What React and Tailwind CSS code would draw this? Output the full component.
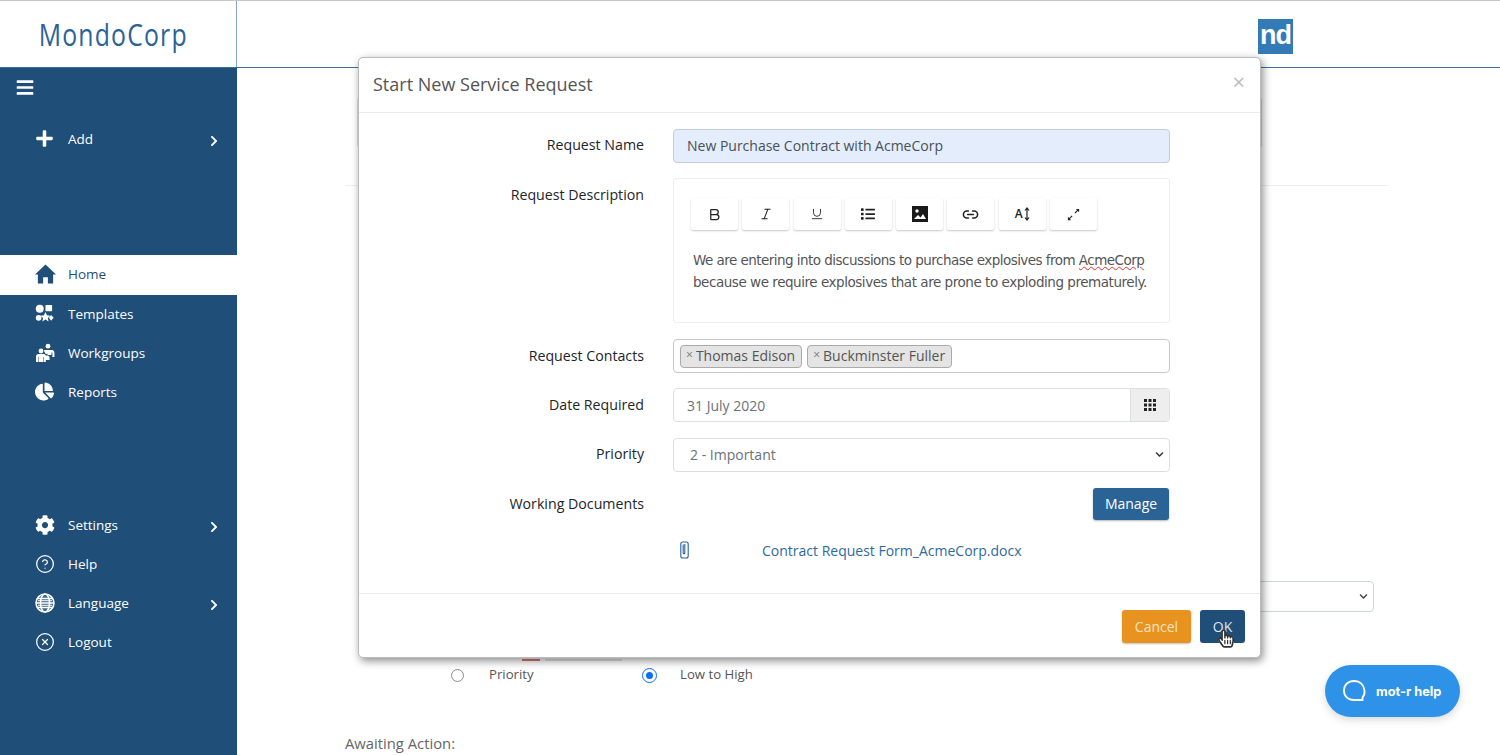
import React from "react";
import { FaBars, FaPlus, FaChevronRight, FaCog, FaChartPie, FaList, FaHandPointer, FaRegHandPointer, FaChevronDown } from "react-icons/fa";
import { Bold, Italic, Underline, Link2, CircleHelp, CircleX } from "lucide-react";

const font = "font-['Open_Sans','Noto_Sans',sans-serif]";

function Home() {
  return (
    <svg viewBox="0 0 22 20" className="w-[21px] h-[20px]" fill="#1f4e79">
      <path d="M11 0L22 10.500h-3V20h-5.500v-6.500h-5V20H3v-9.500H0z" />
    </svg>
  );
}
function Templates() {
  return (
    <svg viewBox="0 0 20 20" className="w-[19px] h-[19px]" fill="white">
      <circle cx="5" cy="5" r="4.200" />
      <rect x="11" y="1" width="7" height="6.500" rx="0.500" />
      <circle cx="3.800" cy="14.500" r="3" />
      <path d="M11 8.500l1.600 3.400 3.600.4-2.700 2.400.8 3.600-3.300-1.900-3.300 1.900.8-3.600-2.700-2.400 3.600-.4z" />
      <path d="M17 11.500l2.600 3-2.600 3-2.400-3z" />
    </svg>
  );
}
function Workgroups() {
  return (
    <svg viewBox="0 0 20 20" className="w-[20px] h-[20px]" fill="white">
      <circle cx="13" cy="3.200" r="2.400" />
      <path d="M9 7h8c1.400 0 2.400 1 2.400 2.400V14h-2V9.500h-.9V12h-4V9h-3z" />
      <circle cx="6" cy="8" r="2.400" />
      <circle cx="11.500" cy="9" r="1.900" />
      <path d="M1 19v-5.500C1 12 2 11 3.500 11h5c1.200 0 2 .6 2.400 1.500h1.600c1.400 0 2 1 2 2.200V17h-3.700v2H8.500v-5H8v5H3.500v-5H3v5z" />
    </svg>
  );
}
function Globe() {
  return (
    <svg viewBox="0 0 20 20" className="w-[20px] h-[20px]" fill="none" stroke="white" strokeWidth="1.500">
      <circle cx="10" cy="10" r="9" fill="white" fillOpacity="0.15" />
      <ellipse cx="10" cy="10" rx="4.500" ry="9" />
      <path d="M2 5.500h16M1 10h18M2 14.500h16" />
      <path d="M3 7.700h14M3 12.300h14" strokeWidth="1" />
    </svg>
  );
}
function NavItem({ icon, label, arrow, active }) {
  return (
    <div className={`flex items-center pb-[2px] pl-[35px] pr-[18px] ${active ? "bg-white text-[#1f4e79] h-[40px]" : "text-white h-[39px]"}`}>
      <span className="w-[33px] flex items-center shrink-0">{icon}</span>
      <span className={`flex-1 text-[13.500px] ${active ? "" : "mt-[2px]"}`}>{label}</span>
      {arrow && <FaChevronRight className="w-[10px] h-[12px] text-white mt-[4px]" />}
    </div>
  );
}
function FieldRow({ label, children, className = "", labelPad = "pt-[5px]" }) {
  return (
    <div className={`flex ${className}`}>
      <div className={`w-[285px] text-right text-[14.200px] font-medium text-[#212529] shrink-0 ${labelPad}`}>{label}</div>
      <div className="ml-[29px] w-[497px]">{children}</div>
    </div>
  );
}
function ToolBtn({ children }) {
  return (
    <div className="w-[47px] h-[32px] bg-white rounded-[2px] shadow-[0_1px_2px_rgba(0,0,0,0.22)] flex items-center justify-center text-[#222]">
      {children}
    </div>
  );
}
function Chip({ children }) {
  return (
    <span className="h-[23px] flex items-center pl-[5px] pr-[6px] pb-[2px] bg-[#e4e4e4] border border-[#aaa] rounded-[4px] text-[14px] text-[#555]">
      <span className="text-[#777] mr-[3px] text-[12px]">×</span>{children}
    </span>
  );
}

export default function App() {
  return (
    <div className={`w-[1500px] h-[755px] relative overflow-hidden bg-white flex flex-col ${font}`}>
      <header className="h-[68px] shrink-0 flex bg-white border-t border-t-[#c8c8c8] border-b border-b-[#3a6f9f]">
        <div className="w-[237px] border-r border-[#8aa5bd] flex items-center justify-center pr-[9px]">
          <span className="inline-block scale-x-[0.8] font-['Open_Sans',sans-serif] font-medium text-[31px] tracking-[1.500px] text-[#2a6496] leading-none">MondoCorp</span>
        </div>
        <div className="flex-1 flex items-start pl-[1021px] pt-[18px]">
          <div className="w-[35px] h-[35px] bg-[#337ab7] flex items-center justify-center text-white font-['Liberation_Sans',sans-serif] font-bold text-[27px] tracking-[-1px] leading-none pb-[2px]">nd</div>
        </div>
      </header>

      <div className="flex-1 flex min-h-0">
        <aside className="w-[237px] shrink-0 bg-[#1f4e79] flex flex-col">
          <div className="h-[187px] pt-[10px] shrink-0">
            <div className="pl-[16px] h-[17px]"><FaBars className="w-[18px] h-[19px] text-white" /></div>
            <div className="mt-[25px]">
              <NavItem icon={<FaPlus className="w-[19px] h-[19px] text-white" />} label="Add" arrow />
            </div>
          </div>
          <NavItem active icon={<Home />} label="Home" />
          <NavItem icon={<Templates />} label="Templates" />
          <NavItem icon={<Workgroups />} label="Workgroups" />
          <NavItem icon={<FaChartPie className="w-[19px] h-[19px] text-white" />} label="Reports" />
          <div className="h-[94px] shrink-0" />
          <NavItem icon={<FaCog className="w-[20px] h-[20px] text-white" />} label="Settings" arrow />
          <NavItem icon={<CircleHelp size={20} strokeWidth={1.500} className="text-white" />} label="Help" />
          <NavItem icon={<Globe />} label="Language" arrow />
          <NavItem icon={<CircleX size={20} strokeWidth={1.500} className="text-white" />} label="Logout" />
        </aside>

        <main className="flex-1 pl-[108px] pr-[112px] flex flex-col min-w-0">
          <div className="h-[118px] shrink-0 border-b border-[#eeeeee] pt-[29px] pl-[12px] pr-[126px]">
            <div className="h-[51px] border border-[#d5e0ea] rounded-[3px]" />
          </div>
          <div className="mt-[395px] h-[31px] flex justify-end pr-[14px] shrink-0">
            <div className="w-[400px] h-[31px] border border-[#ced4da] rounded-[4px] flex items-center justify-end pr-[5px]">
              <FaChevronDown className="w-[9px] h-[9px] text-[#444]" />
            </div>
          </div>
          <div className="h-[10px] mt-[39px] flex items-end pl-[177px] gap-[5px] shrink-0">
            <span className="w-[18px] h-[2px] bg-[#e07070]" />
            <span className="w-[77px] h-[2px] bg-[#e2e2e2]" />
          </div>
          <div className="flex items-center h-[20px] mt-[4px] pl-[106px] text-[13.200px] text-[#555] shrink-0">
            <span className="w-[13px] h-[13px] rounded-full border border-[#8a8a8a] shrink-0" />
            <span className="ml-[25px] w-[154px]">Priority</span>
            <span className="w-[13px] h-[13px] rounded-full border-[3px] border-white bg-[#0d6efd] shrink-0 outline-1 outline-[#0d6efd]" />
            <span className="ml-[24px]">Low to High</span>
          </div>
          <div className="mt-[47px] text-[14.800px] text-[#666] shrink-0">Awaiting Action:</div>
        </main>
      </div>

      {/* Modal */}
      <div className="absolute left-[358px] top-[57px] w-[903px] h-[601px] bg-white rounded-[5px] border border-[#bbb] shadow-[2px_3px_8px_rgba(0,0,0,0.45)] flex flex-col">
        <div className="h-[55px] shrink-0 flex items-center justify-between pl-[14px] pr-[15px] pb-[2px] border-b border-[#e9ecef]">
          <h2 className="text-[18px] text-[#555] font-normal">Start New Service Request</h2>
          <span className="text-[22px] leading-none text-[#bdbdbd] -mt-[6px]">×</span>
        </div>
        <div className="flex-1 flex flex-col pt-[16px]">
          <FieldRow label="Request Name">
            <div className="h-[34px] rounded-[4px] bg-[#e4edfb] border border-[#c4ceda] flex items-center pl-[13px] pb-[1px] text-[14px] text-[#495057]">
              New Purchase Contract with AcmeCorp
            </div>
          </FieldRow>
          <FieldRow className="mt-[15px]" labelPad="pt-[6px]" label="Request Description">
            <div className="h-[145px] border border-[#eeeeee] rounded-[3px] pt-[19px] pl-[17px]">
              <div className="flex gap-[4.300px]">
                <ToolBtn><Bold size={15} strokeWidth={2} /></ToolBtn>
                <ToolBtn><Italic size={14} strokeWidth={1.800} /></ToolBtn>
                <ToolBtn><Underline size={14} strokeWidth={1.500} /></ToolBtn>
                <ToolBtn><FaList className="w-[16px] h-[14px]" /></ToolBtn>
                <ToolBtn>
                  <svg viewBox="0 0 16 16" className="w-[16px] h-[16px]">
                    <rect width="16" height="16" fill="#1a1a1a" />
                    <circle cx="5" cy="5" r="1.700" fill="white" />
                    <path d="M2 13l4-4 2.500 2.500L11 8l3 5z" fill="white" />
                  </svg>
                </ToolBtn>
                <ToolBtn><Link2 size={17} strokeWidth={2.200} /></ToolBtn>
                <ToolBtn>
                  <span className="text-[12px] font-semibold">A</span>
                  <svg viewBox="0 0 6 14" className="w-[6px] h-[14px] ml-[1px]" fill="none" stroke="#222" strokeWidth="1.200">
                    <path d="M3 1v12M1 3.500L3 1l2 2.500M1 10.500L3 13l2-2.500" />
                  </svg>
                </ToolBtn>
                <ToolBtn>
                  <svg viewBox="0 0 16 16" className="w-[15px] h-[15px]" fill="#222" stroke="#222" strokeWidth="1.200">
                    <path d="M9.500 6.500L13 3" fill="none" />
                    <path d="M10.500 2h3.500v3.500z" stroke="none" />
                    <path d="M6.500 9.500L3 13" fill="none" />
                    <path d="M5.500 14H2v-3.500z" stroke="none" />
                  </svg>
                </ToolBtn>
              </div>
              <div className="mt-[19px] ml-[2px] w-[470px] text-[13.500px] leading-[22px] text-[#555] font-['DejaVu_Sans',sans-serif] whitespace-nowrap">
                <div className="tracking-[-0.54px]">We are entering into discussions to purchase explosives from <span className="underline decoration-wavy decoration-[#d33] decoration-1">AcmeCorp</span></div>
                <div className="tracking-[-0.46px]">because we require explosives that are prone to exploding prematurely.</div>
              </div>
            </div>
          </FieldRow>
          <FieldRow className="mt-[16px]" labelPad="pt-[6px]" label="Request Contacts">
            <div className="h-[34px] rounded-[4px] border border-[#c4c8cc] flex items-center pl-[6px] gap-[5px]">
              <Chip>Thomas Edison</Chip>
              <Chip>Buckminster Fuller</Chip>
            </div>
          </FieldRow>
          <FieldRow className="mt-[15px]" labelPad="pt-[6px]" label="Date Required">
            <div className="h-[34px] rounded-[4px] border border-[#dcdfe2] flex overflow-hidden">
              <div className="flex-1 flex items-center pl-[13px] text-[14px] text-[#6b7177]">31 July 2020</div>
              <div className="w-[39px] bg-[#eeeeee] border-l border-[#dcdfe2] flex items-center justify-center">
                <svg viewBox="0 0 12 12" className="w-[12px] h-[12px]" fill="#222">
                  {[0, 4.500, 9].flatMap((x) => [0, 4.500, 9].map((y) => <rect key={`${x}-${y}`} x={x} y={y} width="3" height="3" />))}
                </svg>
              </div>
            </div>
          </FieldRow>
          <FieldRow className="mt-[16px]" label="Priority">
            <div className="h-[34px] rounded-[4px] border border-[#dcdfe2] flex items-center justify-between pl-[16px] pb-[1px] pr-[5px] text-[14px] text-[#6b7177]">
              <span>2 - Important</span>
              <FaChevronDown className="w-[9px] h-[9px] text-[#333]" />
            </div>
          </FieldRow>
          <FieldRow className="mt-[16px]" label="Working Documents">
            <div className="flex justify-end pr-[1px]">
              <button className="w-[76px] h-[32px] rounded-[3px] bg-[#2a6496] text-white text-[14px] font-medium pb-[1px] shadow-[0_1px_2px_rgba(0,0,0,0.3)]">Manage</button>
            </div>
          </FieldRow>
          <div className="flex items-center h-[20px] mt-[20px] pl-[321px]">
            <svg viewBox="0 0 9 18" className="w-[9px] h-[18px]" fill="none" stroke="#2a6496" strokeWidth="1.100">
              <path d="M4.800 3v9c0 1-1.600 1-1.600 0V3.500" />
              <rect x="0.800" y="1" width="7.400" height="16" rx="2" />
            </svg>
            <span className="ml-[73px] text-[14px] text-[#2f6a9c]">Contract Request Form_AcmeCorp.docx</span>
          </div>
        </div>
        <div className="h-[64px] shrink-0 border-t border-[#e9ecef] flex justify-end items-start pt-[16px] pr-[15px] gap-[9px]">
          <button className="w-[69px] h-[33px] rounded-[3px] bg-[#e8921f] text-[#fbe3c0] text-[14px] font-medium shadow-[0_1px_2px_rgba(0,0,0,0.25)]">Cancel</button>
          <button className="w-[45px] h-[33px] rounded-[3px] bg-[#1f4e79] text-[#dce6f0] text-[14px] font-medium relative">
            OK
            <span className="absolute left-[18px] top-[18px] w-[16px] h-[22px]">
              <FaHandPointer className="absolute inset-0 w-[16px] h-[21px] text-white" />
              <FaRegHandPointer className="absolute inset-0 w-[16px] h-[21px] text-[#333]" />
            </span>
          </button>
        </div>
      </div>

      {/* Help widget */}
      <div className="absolute left-[1325px] top-[665px] w-[135px] h-[52px] rounded-[26px] bg-[#2e93e8] shadow-[0_3px_8px_rgba(0,0,0,0.15)] flex items-center pl-[17px] text-white">
        <svg viewBox="0 0 24 24" className="w-[24px] h-[24px]" fill="none" stroke="white" strokeWidth="1.800">
          <path d="M12 2C6 2 2 6 2 11.500S6 21 12 21h8.500v-2.600c1.600-1.800 2.300-4 2-6.900C22 6 18 2 12 2z" />
        </svg>
        <span className="ml-[10px] mt-[1px] text-[12.800px] font-bold font-['Inter',sans-serif]">mot-r help</span>
      </div>
    </div>
  );
}
